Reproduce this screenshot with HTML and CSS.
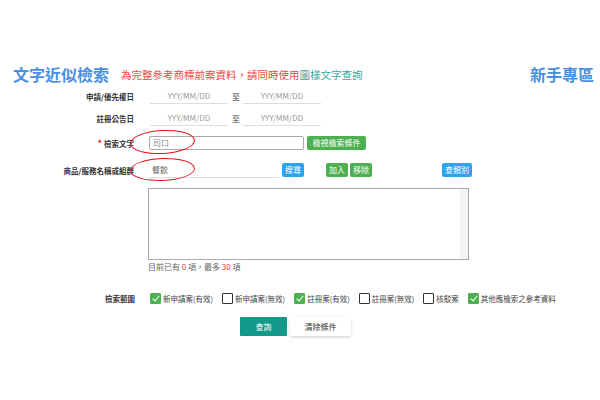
FILE: index.html
```html
<!DOCTYPE html>
<html lang="zh-Hant">
<head>
<meta charset="UTF-8">
<title>文字近似檢索</title>
<link rel="stylesheet" href="styles.css">
</head>
<body>
<div class="page">
  <div class="header">
    <div class="title">文字近似檢索</div>
    <div class="note">為完整參考商標前案資料，請同時使用<span class="link">圖樣文字查詢</span></div>
    <div class="help">新手專區</div>
  </div>

  <div class="row dateRow">
    <div class="label">申請/優先權日</div>
    <div class="date">YYY/MM/DD</div>
    <div class="to">至</div>
    <div class="date">YYY/MM/DD</div>
  </div>
  <div class="row dateRow second">
    <div class="label">註冊公告日</div>
    <div class="date">YYY/MM/DD</div>
    <div class="to">至</div>
    <div class="date">YYY/MM/DD</div>
  </div>

  <div class="row wordRow">
    <div class="label"><span class="star">*</span>檢索文字</div>
    <div class="wordBox">司口</div>
    <div class="btn green wide">檢視檢索條件</div>
    <div class="circle c1"></div>
  </div>

  <div class="row goodsRow">
    <div class="label">商品/服務名稱或組群</div>
    <div class="goodsInput">餐飲</div>
    <div class="btn blue">搜尋</div>
    <div class="btn green add">加入</div>
    <div class="btn green">移除</div>
    <div class="btn blue cls">查類別</div>
    <div class="circle c2"></div>
  </div>

  <div class="listArea">
    <div class="listBox"><div class="scroll"></div></div>
    <div class="count">目前已有 <span class="num">0</span> 項，最多 <span class="num">30</span> 項</div>
  </div>

  <div class="row scopeRow">
    <div class="label">檢索範圍</div>
    <div class="checks">
      <div class="check"><span class="box on"></span>新申請案(有效)</div>
      <div class="check"><span class="box"></span>新申請案(無效)</div>
      <div class="check"><span class="box on"></span>註冊案(有效)</div>
      <div class="check"><span class="box"></span>註冊案(無效)</div>
      <div class="check"><span class="box"></span>核駁案</div>
      <div class="check"><span class="box on"></span>其他應檢索之參考資料</div>
    </div>
  </div>

  <div class="actions">
    <div class="query">查詢</div>
    <div class="clear">清除條件</div>
  </div>
</div>
</body>
</html>
```

FILE: styles.css
```css
body {
  margin: 0;
  background: #ffffff;
  font-family: "Noto Sans CJK TC", "Noto Sans", sans-serif;
  color: #333333;
}

.page {
  width: 600px;
  height: 400px;
  padding-top: 63px;
  box-sizing: border-box;
}

.header {
  display: flex;
  align-items: center;
  padding: 0 6px 0 13px;
  height: 22px;
}
.title {
  font-size: 16px;
  font-weight: bold;
  color: #4a8fe0;
}
.note {
  margin-left: 12px;
  font-size: 10.5px;
  color: #f04848;
}
.note .link {
  color: #3aa89a;
}
.help {
  margin-left: auto;
  font-size: 16px;
  font-weight: bold;
  color: #4a8fe0;
}

.row {
  display: flex;
  align-items: center;
  position: relative;
}
.label {
  width: 134px;
  text-align: right;
  font-size: 7.5px;
  font-weight: bold;
  color: #333333;
  flex-shrink: 0;
}
.star {
  color: #e02020;
  margin-right: 2px;
  font-size: 9px;
}

.dateRow {
  margin-top: 1px;
  height: 20px;
}
.dateRow.second {
  margin-top: 2px;
}
.date {
  width: 78px;
  margin-left: 16px;
  height: 14px;
  border-bottom: 1px solid #dddddd;
  font-size: 8px;
  color: #999999;
  text-align: center;
  line-height: 14px;
}
.to {
  font-size: 8px;
  margin-left: 4px;
  color: #333333;
}
.to + .date {
  margin-left: 3px;
}

.wordRow {
  margin-top: 7px;
  height: 16px;
}
.wordBox {
  margin-left: 15px;
  width: 150px;
  height: 12px;
  border: 1px solid #aaaaaa;
  border-radius: 2px;
  font-size: 8px;
  color: #888888;
  line-height: 12px;
  padding-left: 3px;
}
.btn {
  font-size: 8px;
  color: #ffffff;
  border-radius: 2px;
  height: 14px;
  line-height: 14px;
  padding: 0 3px;
}
.green {
  background: #4caf50;
}
.blue {
  background: #2aa4ee;
}
.wide {
  margin-left: 3px;
  width: 53px;
  text-align: center;
}

.goodsRow {
  margin-top: 11px;
  height: 16px;
}
.goodsInput {
  margin-left: 14px;
  width: 127px;
  height: 14px;
  border-bottom: 1px solid #dddddd;
  font-size: 8px;
  color: #666666;
  line-height: 14px;
  padding-left: 4px;
}
.goodsRow .blue {
  margin-left: 3px;
}
.goodsRow .add {
  margin-left: 22px;
  margin-right: 2px;
}
.goodsRow .cls {
  margin-left: 70px;
}

.circle {
  position: absolute;
  border: 1.5px solid #e8141c;
  border-radius: 50%;
}
.c1 {
  left: 130px;
  top: -5px;
  width: 63px;
  height: 22px;
  transform: rotate(-3deg);
}
.c2 {
  left: 130px;
  top: -4px;
  width: 63px;
  height: 21px;
  transform: rotate(-2deg);
}

.listArea {
  margin-left: 148px;
  margin-top: 10px;
}
.listBox {
  width: 319px;
  height: 70px;
  border: 1px solid #aaaaaa;
  display: flex;
  justify-content: flex-end;
}
.scroll {
  width: 8px;
  background: #f4f4f4;
}
.count {
  font-size: 8px;
  color: #666666;
  margin-top: 1px;
}
.num {
  color: #f03030;
}

.scopeRow {
  margin-top: 18px;
  height: 16px;
}
.scopeRow .label {
  width: 135px;
}
.checks {
  display: flex;
  margin-left: 15px;
  font-size: 7.5px;
  color: #444444;
}
.check {
  display: flex;
  align-items: center;
  margin-right: 9px;
}
.box {
  width: 9px;
  height: 9px;
  border: 1px solid #333333;
  border-radius: 1px;
  margin-right: 2px;
  position: relative;
}
.box.on {
  background: #4caf50;
  border-color: #4caf50;
}
.box.on::after {
  content: '';
  position: absolute;
  left: 3px;
  top: 0px;
  width: 3px;
  height: 6px;
  border-right: 1.5px solid #ffffff;
  border-bottom: 1.5px solid #ffffff;
  transform: rotate(40deg);
}

.actions {
  display: flex;
  margin-left: 240px;
  margin-top: 11px;
}
.query {
  width: 47px;
  height: 19px;
  line-height: 19px;
  text-align: center;
  font-size: 8px;
  color: #ffffff;
  background: #12998a;
  border-radius: 1px;
}
.clear {
  margin-left: 3px;
  width: 61px;
  height: 19px;
  line-height: 19px;
  text-align: center;
  font-size: 8px;
  color: #333333;
  background: #ffffff;
  box-shadow: 0 1px 3px rgba(0, 0, 0, 0.2);
  border-radius: 2px;
}
```
